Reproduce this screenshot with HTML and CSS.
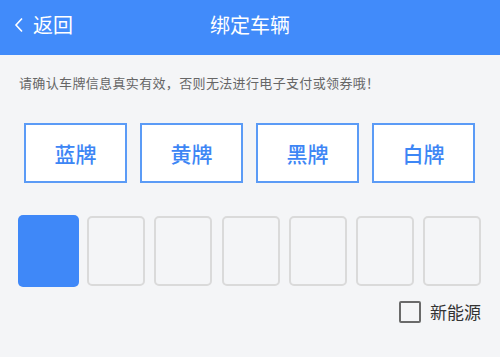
FILE: index.html
```html
<!DOCTYPE html>
<html lang="zh">
<head>
<meta charset="utf-8">
<link rel="stylesheet" href="styles.css">
</head>
<body>
<div class="header">
  <div class="back">
    <svg class="chev" width="10" height="16" viewBox="0 0 10 16"><path d="M8 1.5 L2 8 L8 14.5" fill="none" stroke="#fff" stroke-width="1.6"/></svg>
    <span>返回</span>
  </div>
  <div class="title">绑定车辆</div>
</div>
<p class="notice">请确认车牌信息真实有效，否则无法进行电子支付或领券哦！</p>
<div class="types">
  <div class="type">蓝牌</div>
  <div class="type">黄牌</div>
  <div class="type">黑牌</div>
  <div class="type">白牌</div>
</div>
<div class="cells">
  <div class="cell active"></div>
  <div class="cell"></div>
  <div class="cell"></div>
  <div class="cell"></div>
  <div class="cell"></div>
  <div class="cell"></div>
  <div class="cell"></div>
</div>
<div class="newenergy">
  <span class="box"></span>
  <span class="label">新能源</span>
</div>
</body>
</html>
```
FILE: styles.css
```css
* { box-sizing: border-box; }
html, body { margin: 0; padding: 0; }
body {
  width: 500px;
  height: 357px;
  background: #f4f5f7;
  font-family: "Noto Sans CJK SC", "Noto Sans", sans-serif;
  overflow: hidden;
}
.header {
  position: relative;
  height: 55px;
  background: #418bfa;
  color: #fff;
  display: flex;
  align-items: center;
  justify-content: center;
}
.back {
  position: absolute;
  left: 14px;
  top: 0;
  height: 55px;
  display: flex;
  align-items: center;
  font-size: 20px;
}
.chev { margin-right: 9px; margin-top: -6px; }
.back span { margin-top: -6px; }
.title {
  font-size: 20px;
  margin-top: -6px;
}
.notice {
  margin: 16px 0 0 19px;
  font-size: 13px;
  line-height: 24px;
  color: #666;
  letter-spacing: 0.35px;
}
.types {
  display: flex;
  gap: 13px;
  padding-left: 24px;
  margin-top: 28px;
}
.type {
  width: 103px;
  height: 60px;
  border: 2px solid #5b9bf6;
  background: #fff;
  color: #3d86f5;
  font-size: 21px;
  font-weight: 500;
  display: flex;
  align-items: center;
  justify-content: center;
}
.cells {
  display: flex;
  align-items: center;
  gap: 9.3px;
  padding-left: 18px;
  margin-top: 32px;
}
.cell {
  width: 58px;
  height: 70px;
  border: 2px solid #dadada;
  border-radius: 5px;
}
.cell.active {
  width: 61px;
  height: 72px;
  background: #3f88f8;
  border: none;
  margin-right: -1.3px;
}
.newenergy {
  display: flex;
  align-items: center;
  justify-content: flex-end;
  padding-right: 19px;
  margin-top: 12px;
}
.box {
  width: 22px;
  height: 22px;
  border: 2.5px solid #6a6a6a;
  border-radius: 2px;
  margin-right: 9px;
}
.label {
  font-size: 17px;
  color: #333;
}
```
